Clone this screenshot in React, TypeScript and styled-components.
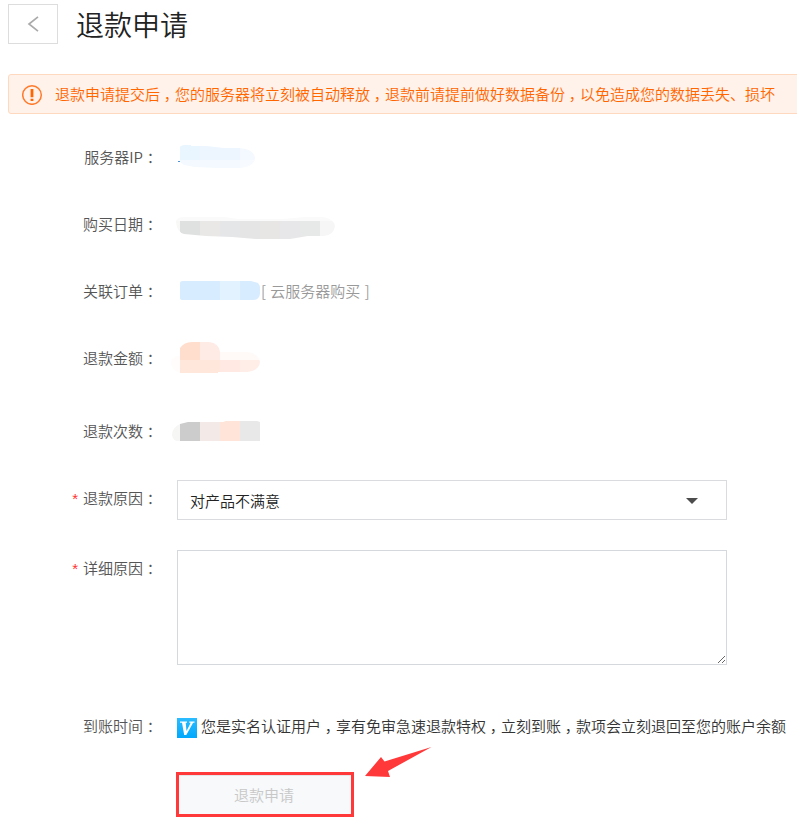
import React from "react";
import styled, { createGlobalStyle } from "styled-components";

const GlobalStyle = createGlobalStyle`
  * { box-sizing: border-box; }
  body {
    margin: 0;
    background: #fff;
    overflow: hidden;
    font-family: "Noto Sans CJK SC", sans-serif;
    font-size: 15px;
    font-weight: 350;
    line-height: 20px;
    color: #333;
  }
`;

const Page = styled.main`
  width: 797px;
  height: 824px;
  padding: 4px 0 0 8px;
  overflow: hidden;
`;

const Header = styled.header`
  display: flex;
  height: 40px;
  gap: 18px;
`;

const BackButton = styled.button`
  display: flex;
  align-items: center;
  justify-content: center;
  width: 50px;
  height: 40px;
  padding: 0;
  border: 1px solid #ddd;
  background: #fff;
`;

const Title = styled.h1`
  margin: 0;
  font-size: 28px;
  font-weight: 350;
  line-height: 40px;
  color: #222;
`;

const Alert = styled.div`
  display: flex;
  align-items: center;
  gap: 12px;
  height: 40px;
  margin: 30px -3px 0 0;
  padding-left: 13px;
  border: 1px solid #ffd9bf;
  border-radius: 3px;
  background: #fff2eb;
  color: #ff6600;
  white-space: nowrap;
`;

const Mark = styled.span`
  display: inline-block;
  width: 1em;
  text-align: center;
  font-feature-settings: "halt";
`;

const Row = styled.div<{ $gap: number }>`
  display: flex;
  align-items: flex-start;
  margin-top: ${(p) => p.$gap}px;
`;

const Label = styled.label<{ $drop?: number }>`
  flex: none;
  width: 150px;
  height: 20px;
  margin: ${(p) => p.$drop ?? 0}px 19px 0 0;
  text-align: right;
  white-space: nowrap;
  color: #555;
`;

const Required = styled.span`
  margin-right: 5px;
  font-family: "Liberation Sans", sans-serif;
  color: #f33;
`;

const Value = styled.div`
  display: flex;
  height: 20px;
  white-space: nowrap;
`;

const Mosaic = styled.svg`
  display: block;
  flex: none;
  margin: -10px 0 0 -7px;
`;

const OrderNote = styled.span`
  word-spacing: 1px;
  color: #999;
`;

const Select = styled.div`
  display: flex;
  align-items: center;
  justify-content: space-between;
  width: 550px;
  height: 40px;
  padding: 2px 28px 0 12px;
  border: 1px solid #d9dbde;
  color: #222;
`;

const Detail = styled.textarea`
  display: block;
  width: 550px;
  height: 115px;
  border: 1px solid #d5d9dd;
  outline: none;
  background: #fff;
  resize: both;
`;

const Badge = styled.svg`
  flex: none;
  margin: 2px 4px 0 0;
`;

const Actions = styled.div`
  display: flex;
  align-items: flex-start;
  margin: 11px 0 0 168px;
`;

const Submit = styled.button`
  width: 178px;
  height: 45px;
  margin: 25px 11px 0 0;
  padding: 0 2px 0 0;
  border: 3px solid #ff3939;
  background: #f7f9fb;
  box-shadow: inset 0 1px #e4e6e8;
  font: inherit;
  color: #c8c8c8;
`;

/* Full-width commas and colons sit in the middle of their cell. */
const Text = ({ children }: { children: string }) => (
  <span>
    {children.split(/([，：])/).map((part, i) =>
      part === "，" || part === "：" ? <Mark key={i}>{part}</Mark> : part,
    )}
  </span>
);

type Block = [x: number, y: number, w: number, h: number, fill: string];

const Redacted = ({ id, outline, blocks, width = 170 }: { id: string; outline: string; blocks: Block[]; width?: number }) => (
  <Mosaic width={width} height="40" viewBox={`0 0 ${width} 40`}>
    <clipPath id={id}>
      <path d={outline} />
    </clipPath>
    <g clipPath={`url(#${id})`} shapeRendering="crispEdges">
      {blocks.map(([x, y, w, h, fill], i) => (
        <rect key={i} x={x} y={y} width={w} height={h} fill={fill} />
      ))}
    </g>
  </Mosaic>
);

export default function App() {
  return (
    <>
      <GlobalStyle />
      <Page>
        <Header>
          <BackButton aria-label="返回">
            <svg width="12" height="16" viewBox="0 0 12 16" fill="none" stroke="#aaa" strokeWidth="1.7">
              <path d="M11 .8 2 8l9 7.2" />
            </svg>
          </BackButton>
          <Title>退款申请</Title>
        </Header>

        <Alert>
          <svg width="21" height="21" viewBox="0 0 21 21" fill="none">
            <circle cx="10" cy="11" r="9.3" stroke="#ff7a2b" strokeWidth="1.5" />
            <path d="M10 5v8.200M10 14.700v2.300" stroke="#ff6600" strokeWidth="2.800" />
          </svg>
          <Text>退款申请提交后，您的服务器将立刻被自动释放，退款前请提前做好数据备份，以免造成您的数据丢失、损坏</Text>
        </Alert>

        <Row $gap={33}>
          <Label><Text>服务器IP：</Text></Label>
          <Value>
            <Redacted
              id="ip"
              outline="M8 24h2V10q0-1 4-2h7v1h15l18 2h15q15 1 16 10-1 9-16 10H49l-24-1-11-2-4-3H8z"
              blocks={[[10, 8, 20, 17, "#e9f5ff"], [30, 8, 40, 17, "#edf6ff"], [70, 8, 20, 17, "#f4f9ff"], [10, 23, 60, 10, "#f3f9ff"], [70, 23, 20, 10, "#f7fbff"], [8, 24, 2, 1, "#4d94d8"]]}
            />
          </Value>
        </Row>
        <Row $gap={47}>
          <Label><Text>购买日期：</Text></Label>
          <Value>
            <Redacted
              id="date"
              outline="M6 17q1-4 8-4h40l14 2h45l22-2h18q11 2 12 9-1 9-11 10h-16l-18 3H86l-24-2-26-1-22-2q-7-2-8-12z"
              blocks={[[6, 11, 160, 6, "#fafafa"], [6, 17, 4, 18, "#f8f8f7"], [10, 17, 20, 20, "#dfe1e0"], [30, 17, 20, 20, "#eae8e7"], [50, 17, 20, 20, "#e5e6e8"], [70, 17, 20, 20, "#e5e5e6"], [90, 17, 20, 20, "#e8e6e4"], [110, 17, 20, 20, "#e7e7e9"], [130, 17, 20, 20, "#e7e9e8"], [150, 17, 16, 20, "#f6f6f6"]]}
            />
          </Value>
        </Row>
        <Row $gap={47}>
          <Label><Text>关联订单：</Text></Label>
          <Value>
            <Redacted
              id="order"
              width={91}
              outline="M10 12q0-2 3-2h68l7 2q2 2 2 6v5q-1 6-7 6H13q-3 0-3-2z"
              blocks={[[10, 8, 40, 24, "#d7ecff"], [50, 8, 20, 24, "#e3f2ff"], [70, 8, 20, 24, "#d7ecff"]]}
            />
            <OrderNote>[ 云服务器购买 ]</OrderNote>
          </Value>
        </Row>
        <Row $gap={47}>
          <Label><Text>退款金额：</Text></Label>
          <Value>
            <Redacted
              id="amount"
              outline="M1 24q1-6 9-6l0-8q4-6 12-6h17q10 1 11 10h27q11 1 13 10-1 9-14 10H48v1H10q-9-3-9-11z"
              blocks={[[1, 8, 9, 27, "#fffcfb"], [10, 4, 20, 18, "#ffdecd"], [30, 4, 20, 18, "#ffebe5"], [50, 4, 40, 18, "#fff9f7"], [10, 22, 40, 14, "#ffe7dc"], [50, 22, 20, 14, "#ffe9e2"], [70, 22, 20, 14, "#ffeee8"]]}
            />
          </Value>
        </Row>
        <Row $gap={53}>
          <Label><Text>退款次数：</Text></Label>
          <Value>
            <Redacted
              id="count"
              outline="M2 23q1-7 8-10l8-2h35l3-1h31l3 1v19H6q-4-2-4-7z"
              blocks={[[2, 8, 8, 22, "#f6f6f5"], [10, 8, 20, 22, "#cccccc"], [30, 8, 20, 22, "#f3e9e7"], [50, 8, 20, 22, "#ffe4da"], [70, 8, 20, 22, "#e8e8e8"]]}
            />
          </Value>
        </Row>

        <Row $gap={39}>
          <Label $drop={8}><Required>*</Required><Text>退款原因：</Text></Label>
          <Select>
            对产品不满意
            <svg width="12" height="6" viewBox="0 0 12 6"><path d="M0 0h12L6 6z" fill="#4c4c4c" /></svg>
          </Select>
        </Row>
        <Row $gap={30}>
          <Label $drop={8}><Required>*</Required><Text>详细原因：</Text></Label>
          <Detail />
        </Row>
        <Row $gap={51}>
          <Label><Text>到账时间：</Text></Label>
          <Value>
            <Badge width="20" height="20" viewBox="0 0 20 20">
              <linearGradient id="badge" x2="0" y2="1">
                <stop stopColor="#2cbcff" />
                <stop offset="1" stopColor="#00a8fc" />
              </linearGradient>
              <rect width="20" height="20" fill="url(#badge)" />
              <path d="M3 3.500h7v1.300H8.700l.8 8.200 4.200-8.200h-1.400V3.500H17.500v1.300h-1.400L9.300 17H7.200L5 4.800H3z" fill="#fff" />
            </Badge>
            <Text>您是实名认证用户，享有免审急速退款特权，立刻到账，款项会立刻退回至您的账户余额</Text>
          </Value>
        </Row>
        <Actions>
          <Submit disabled>退款申请</Submit>
          <svg width="67" height="31" viewBox="0 0 67 31">
            <path d="M0 29 16 10l3.500 4.500L66.500 0 23 24l2 6z" fill="#ff3939" />
          </svg>
        </Actions>
      </Page>
    </>
  );
}
